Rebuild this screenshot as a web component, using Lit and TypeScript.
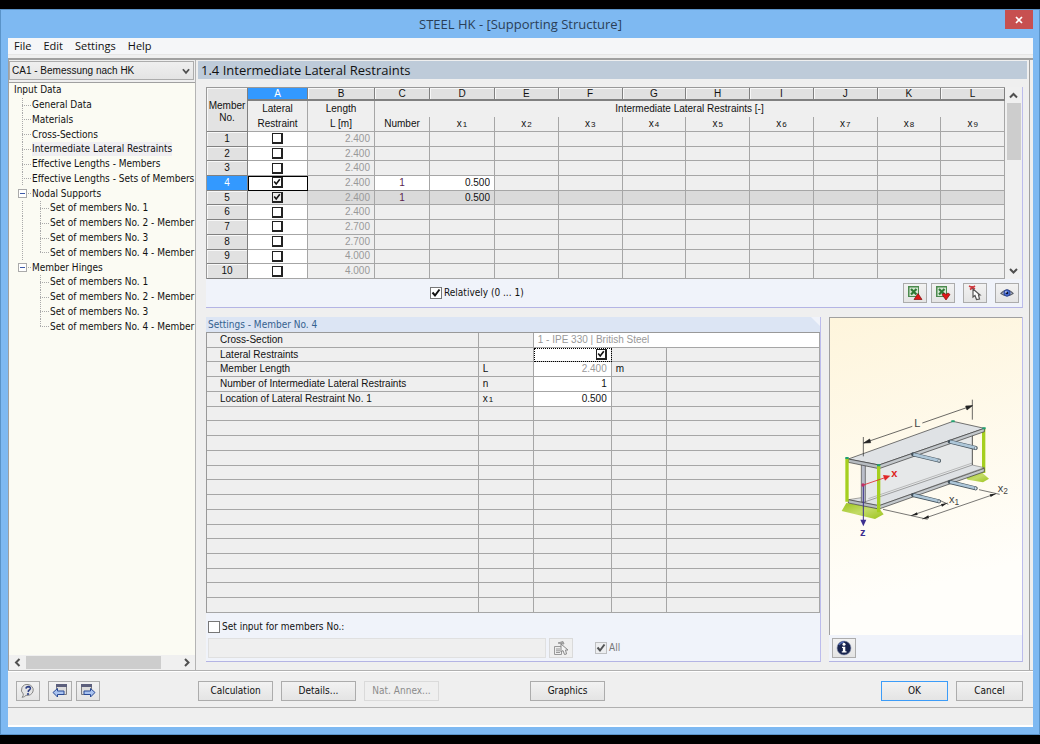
import { LitElement, html, svg, css, nothing } from "lit";
import { customElement, property, state } from "lit/decorators.js";
import { classMap } from "lit/directives/class-map.js";

interface TreeNode {
  label: string;
  children?: string[];
}

interface MemberRow {
  no: number;
  length: string;
  restrained: boolean;
  count?: string;
  x1?: string;
}

const TREE: TreeNode[] = [
  { label: "General Data" },
  { label: "Materials" },
  { label: "Cross-Sections" },
  { label: "Intermediate Lateral Restraints" },
  { label: "Effective Lengths - Members" },
  { label: "Effective Lengths - Sets of Members" },
  {
    label: "Nodal Supports",
    children: [
      "Set of members No. 1",
      "Set of members No. 2 - Member S",
      "Set of members No. 3",
      "Set of members No. 4 - Member S",
    ],
  },
  {
    label: "Member Hinges",
    children: [
      "Set of members No. 1",
      "Set of members No. 2 - Member S",
      "Set of members No. 3",
      "Set of members No. 4 - Member S",
    ],
  },
];

const MEMBERS: MemberRow[] = [
  { no: 1, length: "2.400", restrained: false },
  { no: 2, length: "2.400", restrained: false },
  { no: 3, length: "2.400", restrained: false },
  { no: 4, length: "2.400", restrained: true, count: "1", x1: "0.500" },
  { no: 5, length: "2.400", restrained: true, count: "1", x1: "0.500" },
  { no: 6, length: "2.400", restrained: false },
  { no: 7, length: "2.700", restrained: false },
  { no: 8, length: "2.700", restrained: false },
  { no: 9, length: "4.000", restrained: false },
  { no: 10, length: "4.000", restrained: false },
];

const chevron = (dir: "up" | "down" | "left" | "right") => {
  const paths = {
    up: "M1 6.5 4.500 3 8 6.500",
    down: "M1 3 4.500 6.500 8 3",
    left: "M6.500 1 3 4.500 6.500 8",
    right: "M3 1 6.500 4.500 3 8",
  };
  return html`<svg width="9" height="9" viewBox="0 0 9 9" aria-hidden="true">
    <path d=${paths[dir]} fill="none" stroke="#505050" stroke-width="2" />
  </svg>`;
};

const sheet = svg`
  <rect x="1" y="1" width="11" height="11" fill="#4c8a4e" />
  <rect x="2.500" y="2.500" width="8.500" height="8.500" fill="#d6e8d3" />
  <path d="M4 4 9.500 9.500M9.500 4 4 9.500" stroke="#2f7a35" stroke-width="2.200" />`;

const icons = {
  exportXls: html`<svg width="16" height="16" viewBox="0 0 16 16" aria-hidden="true">${sheet}
    <path d="M7 14.500 11 8.500 15 14.500Z" fill="#e01818" stroke="#7c0c0c" stroke-width=".7" /></svg>`,
  importXls: html`<svg width="16" height="16" viewBox="0 0 16 16" aria-hidden="true">${sheet}
    <path d="M7 9.500 11 15 15 9.500 13 8 11 9.500 9 8Z" fill="#e01818" stroke="#7c0c0c" stroke-width=".7" /></svg>`,
  pick: html`<svg width="16" height="16" viewBox="0 0 16 16" aria-hidden="true">
    <path d="M2 1 8 4M8 1 3 4.500M5 1V4" stroke="#cf3a40" stroke-width="1.600" />
    <path d="M6 4V12L8 10.500 9.500 14.500 12.500 14 11.500 10H13Z" fill="#fff" stroke="#555" stroke-width="1.200" /></svg>`,
  pickList: html`<svg width="16" height="16" viewBox="0 0 16 16" aria-hidden="true">
    <path d="M1.500 6.500H8.500V14.500H1.500ZM3 9H7M3 10.800H7M3 12.500H7" fill="#eee" stroke="#999" />
    <path d="M5 3 10 1.500 11 4Z" fill="#aaa" stroke="#999" />
    <path d="M8 4V12L10 10.500 11.500 14.500 13.500 14 12.500 10H15Z" fill="#f4f4f4" stroke="#888" /></svg>`,
  eye: html`<svg width="16" height="16" viewBox="0 0 16 16" aria-hidden="true">
    <path d="M2 8.500Q8 1.500 14 8.500Q8 13 2 8.500Z" fill="#e4e6ee" stroke="#5a606e" stroke-width="1.200" />
    <circle cx="8" cy="8" r="3.200" fill="#4a6fd8" stroke="#2a4290" />
    <circle cx="8" cy="8" r="1.300" fill="#0c1436" /><circle cx="7" cy="7" r=".8" fill="#fff" /></svg>`,
  info: html`<svg width="16" height="16" viewBox="0 0 16 16" aria-hidden="true">
    <circle cx="8" cy="8" r="7" fill="#18244e" stroke="#8a93b0" stroke-width=".6" />
    <path d="M3 5A6 6 0 0 1 8 2" stroke="#5069b0" fill="none" stroke-width="1.500" />
    <circle cx="8" cy="4.300" r="1.500" fill="#fff" />
    <path d="M6 6.800H9.300V11.300H10.500V12.600H5.800V11.300H6.900V8H6Z" fill="#fff" /></svg>`,
  help: html`<svg width="16" height="16" viewBox="0 0 16 16" aria-hidden="true">
    <path d="M8 1.500A5.800 5.500 0 1 1 6 12.300Q4.500 14.200 2 14.300Q3.500 13 3.300 11A5.800 5.500 0 0 1 8 1.500Z" fill="#e4e4e4" stroke="#888" />
    <path d="M6 5.600Q6.200 3.600 8.400 3.600Q10.800 3.800 10.300 5.800Q9.800 7 8.500 7.700L8.200 9" fill="none" stroke="#2c3f86" stroke-width="1.600" />
    <circle cx="8" cy="11" r="1.100" fill="#2c3f86" /></svg>`,
  prev: html`<svg width="16" height="16" viewBox="0 0 16 16" aria-hidden="true">
    <path d="M4.500 1.500H14.500V11.500H4.500Z" fill="#dcdcdc" stroke="#7c7c80" /><path d="M4 1H15V4H4Z" fill="#5c5f7c" />
    <path d="M1 9.500 5.500 5.500V8H12V11.500H5.500V14Z" fill="#a9c3f0" stroke="#294a96" /></svg>`,
  next: html`<svg width="16" height="16" viewBox="0 0 16 16" aria-hidden="true">
    <path d="M1.500 1.500H11.500V11.500H1.500Z" fill="#dcdcdc" stroke="#7c7c80" /><path d="M1 1H12V4H1Z" fill="#5c5f7c" />
    <path d="M15 9.500 10.500 5.500V8H4V11.500H10.500V14Z" fill="#a9c3f0" stroke="#294a96" /></svg>`,
};

const shared = css`
  * {
    box-sizing: border-box;
  }
  button,
  input,
  select {
    font: inherit;
    color: inherit;
    margin: 0;
    padding: 0;
  }
  svg {
    display: block;
    flex: none;
  }
  .check {
    appearance: none;
    flex: none;
    display: block;
    width: 12px;
    height: 12px;
    border: 1px solid #777;
    background: #fff center / 10px 10px no-repeat;
  }
  .check:checked {
    background-image: url("data:image/svg+xml,%3Csvg xmlns='http://www.w3.org/2000/svg' viewBox='0 0 10 10'%3E%3Cpath d='M1.500 4.500 4 7.500 8.500 1.500' fill='none' stroke='%23111' stroke-width='2'/%3E%3C/svg%3E");
  }
  .check:disabled {
    background-color: #ececec;
    border-color: #aaa;
    opacity: 0.7;
  }
  .check.raised {
    width: 11px;
    height: 11px;
    margin: 0 auto;
    border: 1px solid #222;
    border-right-width: 2px;
    border-bottom-width: 2px;
    background-size: 8px 8px;
  }
  .btn {
    display: inline-flex;
    align-items: center;
    justify-content: center;
    height: 20px;
    border: 1px solid #acacac;
    background: linear-gradient(#f2f2f2, #e4e4e4);
    flex: none;
  }
  .btn.icon {
    width: 24px;
  }
  .btn:disabled {
    color: #8b8b8b;
    border-color: #dadada;
    background: #efefef;
  }
  .grid {
    width: 100%;
    table-layout: fixed;
    border-collapse: separate;
    border-spacing: 0;
    border-left: 1px solid #999;
    border-top: 1px solid #999;
    font: 10px/12px "Liberation Sans", Arial, sans-serif;
  }
  .grid th,
  .grid td {
    padding: 0;
    font-weight: normal;
    border-right: 1px solid #a6a6a6;
    border-bottom: 1px solid #a6a6a6;
    background: #efefef;
    overflow: hidden;
    white-space: nowrap;
  }
  .grid .field {
    display: block;
    width: 100%;
    height: 12px;
    border: 0;
    background: transparent;
    outline: none;
  }
  .grid .right {
    text-align: right;
    padding-right: 4px;
  }
  .grid .dim {
    color: #999;
  }
  .grid .white {
    background: #fff;
  }
  .grid sub {
    font-size: 8px;
    line-height: 8px;
    vertical-align: baseline;
    padding-left: 1px;
  }
`;

@customElement("nav-tree")
class NavTree extends LitElement {
  @state() private current = "Intermediate Lateral Restraints";

  static styles = [
    shared,
    css`
      :host {
        display: block;
        overflow: hidden;
      }
      .tree {
        list-style: none;
        margin: 0;
        padding: 0 0 0 5px;
        height: 251px;
        display: grid;
        grid-auto-rows: 1fr;
      }
      .item {
        display: flex;
        align-items: center;
        white-space: nowrap;
      }
      .link {
        color: #111;
        text-decoration: none;
        line-height: 14px;
      }
      .link.current {
        background: #f0eff2;
      }
      .guide {
        align-self: stretch;
        flex: none;
        width: 10px;
        margin-left: 8px;
        background-repeat: no-repeat;
        background-image: repeating-linear-gradient(#aaa 0 1px, transparent 1px 2px),
          repeating-linear-gradient(90deg, #aaa 0 1px, transparent 1px 2px);
        background-size: 1px 100%, 9px 1px;
        background-position: 0 0, 0 50%;
      }
      .guide.last {
        background-size: 1px 50%, 9px 1px;
      }
      .guide.through {
        background-size: 1px 100%, 0 0;
      }
      .guide.blank {
        background: none;
      }
      .toggle {
        flex: none;
        width: 9px;
        height: 9px;
        margin-left: 4px;
        border: 1px solid #aaa;
        background: linear-gradient(#3d5aa8, #3d5aa8) center / 5px 1px no-repeat #fff;
      }
      .stub {
        flex: none;
        width: 5px;
        height: 1px;
        background: repeating-linear-gradient(90deg, transparent 0 1px, #aaa 1px 2px);
      }
    `,
  ];

  private link(label: string, pick = false) {
    const current = pick && label === this.current;
    return html`<a
      href="#"
      class=${classMap({ link: true, current })}
      @click=${(e: Event) => {
        e.preventDefault();
        this.current = label;
      }}
      >${label}</a
    >`;
  }

  render() {
    return html`<ul class="tree">
      <li class="item">${this.link("Input Data")}</li>
      ${TREE.map((node, i) => {
        const lastBranch = i === TREE.length - 1;
        return html`<li class="item">
            ${node.children
              ? html`<button class="toggle" aria-label="Collapse ${node.label}"></button><span class="stub"></span>`
              : html`<span class="guide"></span>`}
            ${this.link(node.label, true)}
          </li>
          ${node.children?.map(
            (child, j, all) => html`<li class="item">
              <span class=${classMap({ guide: true, through: !lastBranch, blank: lastBranch })}></span>
              <span class=${classMap({ guide: true, last: j === all.length - 1 })}></span>
              ${this.link(child)}
            </li>`
          )}`;
      })}
    </ul>`;
  }
}

@customElement("member-grid")
class MemberGrid extends LitElement {
  @property({ type: Number }) selected = 4;

  static styles = [
    shared,
    css`
      :host {
        display: flex;
      }
      .grid {
        flex: 1;
        width: 0;
        height: 191px;
        text-align: center;
      }
      .c-no {
        width: 41px;
      }
      .c-a {
        width: 60px;
      }
      .c-b {
        width: 67px;
      }
      .c-c {
        width: 55px;
      }
      .c-d {
        width: 65px;
      }
      .letters th {
        height: 13px;
        line-height: 10px;
        background: #e1e1e1;
        border-color: #808080;
        border-bottom-width: 2px;
        box-shadow: inset 1px 1px #f8f8f8;
      }
      .letters .active {
        background: #3399ff;
        color: #fff;
        box-shadow: none;
      }
      .letters .corner {
        line-height: 12px;
        background: #e3e3e3;
        border-bottom-width: 1px;
        padding-top: 4px;
      }
      .titles th {
        height: 15px;
      }
      .titles .two {
        line-height: 15px;
      }
      .titles .group {
        border-bottom: 0;
      }
      .no {
        background: #e1e1e1 !important;
        border-color: #808080 !important;
        box-shadow: inset 1px 1px #f8f8f8;
      }
      .picked .no {
        background: #3399ff !important;
        color: #fff;
        box-shadow: none;
      }
      .picked .box {
        outline: 1px solid #000;
        outline-offset: -1px;
      }
      .shade td {
        background: #dadada;
      }
      .shade .box {
        background: #eaeaea;
      }
      .shade .check {
        background-color: #eaeaea;
      }
      .count {
        color: #5a1e50;
        text-align: center;
      }
      .scroll {
        width: 17px;
        display: flex;
        flex-direction: column;
        align-items: center;
        padding: 4px 0;
        background: #f0f0f0;
      }
      .thumb {
        width: 14px;
        height: 57px;
        margin: 3px 0 auto;
        background: #cdcdcd;
      }
    `,
  ];

  render() {
    const letters = "ABCDEFGHIJKL".split("");
    return html`<table class="grid">
        <colgroup>
          <col class="c-no" /><col class="c-a" /><col class="c-b" /><col class="c-c" /><col class="c-d" />
          <col span="8" />
        </colgroup>
        <thead>
          <tr class="letters">
            <th class="corner" rowspan="3">Member<br />No.</th>
            ${letters.map((l) => html`<th class=${l === "A" ? "active" : ""}>${l}</th>`)}
          </tr>
          <tr class="titles">
            <th class="two" rowspan="2">Lateral<br />Restraint</th>
            <th class="two" rowspan="2">Length<br />L [m]</th>
            <th class="group" colspan="10">Intermediate Lateral Restraints [-]</th>
          </tr>
          <tr class="titles">
            <th>Number</th>
            ${[1, 2, 3, 4, 5, 6, 7, 8, 9].map((n) => html`<th>x<sub>${n}</sub></th>`)}
          </tr>
        </thead>
        <tbody>
          ${MEMBERS.map((m) => {
            const picked = m.no === this.selected;
            const edit = picked ? "white" : "";
            return html`<tr class=${classMap({ picked, shade: m.no === 5 })}>
              <th class="no" scope="row">${m.no}</th>
              <td class="box white">
                <input type="checkbox" class="check raised" aria-label="Lateral restraint, member ${m.no}" .checked=${m.restrained} />
              </td>
              <td class="right dim">${m.length}</td>
              <td class=${edit}>
                ${m.count ? html`<input class="field count" aria-label="Number, member ${m.no}" .value=${m.count} />` : nothing}
              </td>
              <td class=${edit}>
                ${m.x1 ? html`<input class="field right" aria-label="x1, member ${m.no}" .value=${m.x1} />` : nothing}
              </td>
              ${[2, 3, 4, 5, 6, 7, 8, 9].map(() => html`<td></td>`)}
            </tr>`;
          })}
        </tbody>
      </table>
      <div class="scroll">${chevron("up")}<span class="thumb"></span>${chevron("down")}</div>`;
  }
}

@customElement("settings-grid")
class SettingsGrid extends LitElement {
  static styles = [
    shared,
    css`
      :host {
        display: block;
      }
      .grid {
        height: 281px;
      }
      .c-sym {
        width: 55px;
      }
      .c-val {
        width: 78px;
      }
      .c-unit {
        width: 55px;
      }
      .c-note {
        width: 25%;
      }
      .name {
        text-align: left;
        text-indent: 13px;
      }
      .pad {
        text-indent: 4px;
      }
      .focus {
        outline: 1px dotted #000;
        outline-offset: -1px;
      }
      .focus .check {
        margin: 0 4px 0 auto;
      }
    `,
  ];

  render() {
    return html`<table class="grid">
      <colgroup>
        <col /><col class="c-sym" /><col class="c-val" /><col class="c-unit" /><col class="c-note" />
      </colgroup>
      <tbody>
        <tr>
          <th class="name" scope="row">Cross-Section</th>
          <td></td>
          <td class="white dim pad" colspan="3">1 - IPE 330 | British Steel</td>
        </tr>
        <tr>
          <th class="name" scope="row">Lateral Restraints</th>
          <td></td>
          <td class="white focus">
            <input type="checkbox" class="check raised" aria-label="Lateral Restraints" checked />
          </td>
          <td></td>
          <td></td>
        </tr>
        <tr>
          <th class="name" scope="row">Member Length</th>
          <td class="pad">L</td>
          <td class="white right dim">2.400</td>
          <td class="pad">m</td>
          <td></td>
        </tr>
        <tr>
          <th class="name" scope="row">Number of Intermediate Lateral Restraints</th>
          <td class="pad">n</td>
          <td class="white"><input class="field right" aria-label="Number of Intermediate Lateral Restraints" value="1" /></td>
          <td></td>
          <td></td>
        </tr>
        <tr>
          <th class="name" scope="row">Location of Lateral Restraint No. 1</th>
          <td class="pad">x<sub>1</sub></td>
          <td class="white"><input class="field right" aria-label="Location of Lateral Restraint No. 1" value="0.500" /></td>
          <td></td>
          <td></td>
        </tr>
        ${Array.from({ length: 14 }, () => html`<tr><td>&nbsp;</td><td></td><td></td><td></td><td></td></tr>`)}
      </tbody>
    </table>`;
  }
}

@customElement("beam-sketch")
class BeamSketch extends LitElement {
  static styles = css`
    :host {
      display: block;
    }
    svg {
      display: block;
    }
    .label {
      font: 33px "Liberation Sans", Arial, sans-serif;
      fill: #444;
    }
    .small {
      font-size: 25px;
    }
    .red {
      fill: #d22;
      font-weight: bold;
    }
    .blue {
      fill: #3b2f8f;
      font-weight: bold;
    }
  `;

  private rod(x: number, y: number) {
    return svg`<path d="M${x} ${y} L${x + 78} ${y + 19}" stroke="#44525c" stroke-width="12" stroke-linecap="round" />
      <path d="M${x + 1} ${y} L${x + 76} ${y + 18}" stroke="#adc6d8" stroke-width="8" />
      <ellipse cx="${x + 78}" cy="${y + 19}" rx="3.500" ry="5" fill="#dce8f0" stroke="#44525c" stroke-width="1.500" />`;
  }

  render() {
    return html`<svg width="190" height="165" viewBox="0 0 570 495" role="img" aria-label="Beam with intermediate lateral restraints">
      <defs>
        <linearGradient id="foot" x1="0" y1="0" x2="1" y2="1">
          <stop offset="0" stop-color="#9cc41c" /><stop offset=".5" stop-color="#c3db68" /><stop offset="1" stop-color="#9cc41c" />
        </linearGradient>
      </defs>
      <path d="M404 276 452 262 474 281 456 292 410 284Z" fill="url(#foot)" />
      <path d="M46 354 32 378 132 402 158 388 144 370Z" fill="url(#foot)" />
      <path d="M458 130V264" stroke="#a5cf1f" stroke-width="10" />
      <path d="M103 236 424 138V248L103 352Z" fill="#e6e8e9" />
      <path d="M424 138V240" stroke="#333" stroke-width="2.500" />
      <path d="M52 344 91 338 103 350 424 240 460 248 144 362Z" fill="#dfe2e5" stroke="#555" stroke-width="1.500" />
      <path d="M112 341 424 234" stroke="#888" stroke-width="1.500" fill="none" />
      <path d="M144 362 460 250V260L144 372Z" fill="#c3c8cc" stroke="#333" stroke-width="2" />
      <path d="M52 344 144 362V372L52 354Z" fill="#b7bcc1" stroke="#333" stroke-width="2" />
      <path d="M91 234H103V352L91 350Z" fill="#b9bdc9" stroke="#444" stroke-width="2" />
      <path d="M52 222 366 109 460 130 144 240Z" fill="#dfe2e5" stroke="#333" stroke-width="2" />
      <path d="M144 240 460 130V140L144 251Z" fill="#c3c8cc" stroke="#333" stroke-width="2" />
      <path d="M52 222 144 240V251L52 232Z" fill="#b7bcc1" stroke="#333" stroke-width="2" />
      <path d="M48 220V350M143 242V382" stroke="#a5cf1f" stroke-width="10" />
      <path d="M43 219H53M138 241H148M361 109H371M454 130H464" stroke="#20a070" stroke-width="6" />
      ${this.rod(246, 208)}${this.rod(356, 170)}${this.rod(246, 330)}${this.rod(356, 291)}
      <path d="M97 156V214M424 44V104M98 174 244 124M274 114 424 62" stroke="#333" stroke-width="2.200" />
      <path d="M98 174 116 162 119 173ZM424 62 404 63 408 75Z" fill="#222" stroke="#222" stroke-width="2" />
      <path d="M156 373 290 403M240 392 350 354M274 402 495 326M444 314 506 328M328 347 352 358" stroke="#333" stroke-width="2" fill="none" />
      <path d="M240 392 258 382 260 390ZM274 402 292 391 294 400ZM348 355 330 357 333 365ZM495 326 476 328 479 336Z" fill="#222" />
      <path d="M97 302V408" stroke="#3b2f8f" stroke-width="3" />
      <path d="M88 404H106L97 424Z" fill="#3b2f8f" />
      <path d="M97 300 162 278" stroke="#e02828" stroke-width="2.500" />
      <path d="M156 270 178 272 162 287Z" fill="#e02828" />
      <circle cx="96" cy="300" r="5" fill="#c02c68" />
      <text class="label" x="250" y="126">L</text>
      <text class="label red" x="181" y="277">x</text>
      <text class="label blue" x="87" y="452">z</text>
      <text class="label" x="354" y="354">x<tspan class="small" dy="7">1</tspan></text>
      <text class="label" x="500" y="320">x<tspan class="small" dy="7">2</tspan></text>
    </svg>`;
  }
}

@customElement("app-root")
class AppRoot extends LitElement {
  static styles = [
    shared,
    css`
      :host {
        display: flex;
        flex-direction: column;
        min-height: 100vh;
        box-sizing: border-box;
        padding: 9px 0;
        background: #000;
        color: #111;
        font: 10px/14px "DejaVu Sans Condensed", "DejaVu Sans", sans-serif;
      }
      .window {
        flex: 1;
        display: flex;
        flex-direction: column;
        padding: 0 6px 7px 7px;
        border: 1px solid #5a93c8;
        background: #7eb9f2;
      }
      .titlebar {
        display: grid;
        grid-template-columns: 28px 1fr 28px;
        height: 28px;
        align-items: center;
      }
      .caption {
        grid-column: 2;
        margin: 0;
        padding-bottom: 1px;
        text-align: center;
        font: 13px/20px "Open Sans", "Noto Sans", sans-serif;
        color: #2a3f58;
      }
      .close {
        align-self: start;
        width: 28px;
        height: 19px;
        border: 0;
        display: grid;
        place-items: center;
        background: #c75050;
      }
      .client {
        flex: 1;
        display: flex;
        flex-direction: column;
        background: #efefef;
      }
      .menu {
        display: flex;
        gap: 12px;
        height: 17px;
        padding-left: 6px;
        align-items: center;
        background: #f5f6f8;
        border-bottom: 1px solid #e6e6e6;
        font: 11px/16px "Open Sans", "Noto Sans", sans-serif;
      }
      .menu button {
        border: 0;
        background: none;
      }
      .main {
        flex: 1;
        display: flex;
        gap: 2px;
        margin-top: 3px;
        border-top: 2px solid #a0a0a0;
        border-bottom: 1px solid #b0b0b0;
      }
      .side {
        width: 188px;
        flex: none;
        display: flex;
        flex-direction: column;
        border-left: 1px solid #a0a0a0;
        border-right: 1px solid #b4b4b4;
        padding-top: 1px;
      }
      .case {
        appearance: none;
        height: 19px;
        margin: 0 1px 2px 0;
        padding-left: 2px;
        border: 1px solid #acacac;
        border-radius: 0;
        font: 10px/14px "Liberation Sans", Arial, sans-serif;
        background: url("data:image/svg+xml,%3Csvg xmlns='http://www.w3.org/2000/svg' viewBox='0 0 9 9'%3E%3Cpath d='M1 2.500 4.500 6.500 8 2.500' fill='none' stroke='%23505050' stroke-width='2'/%3E%3C/svg%3E")
            right 3px center / 8px 8px no-repeat,
          linear-gradient(#efefef, #e4e4e4);
      }
      .treebox {
        flex: 1;
        border-top: 1px solid #a0a0a0;
        background: #fbfbf3;
        min-width: 0;
      }
      .hscroll {
        display: flex;
        align-items: center;
        height: 15px;
        padding: 0 4px;
        background: #f0f0f0;
      }
      .hthumb {
        width: 135px;
        height: 13px;
        margin: 0 auto 0 4px;
        background: #cdcdcd;
      }
      .work {
        flex: 1;
        min-width: 0;
        display: flex;
        flex-direction: column;
        margin-right: 3px;
        padding-top: 1px;
        border-right: 1px solid #a0a0a0;
      }
      .heading {
        margin: 0 2px 0 0;
        padding-left: 3px;
        background: #becbd9;
        font: 13px/18px "Open Sans", "Noto Sans", sans-serif;
      }
      .body {
        flex: 1;
        display: flex;
        flex-direction: column;
        gap: 9px;
        padding: 8px 6px 8px 8px;
      }
      .panel {
        background: #f0f3fa;
        border-right: 1px solid #bcbcec;
        border-bottom: 1px solid #b4b4e4;
      }
      .strip {
        display: grid;
        grid-template-columns: 1fr auto;
        align-items: center;
        height: 28px;
        padding: 0 3px 0 224px;
      }
      .opt {
        display: inline-flex;
        align-items: center;
        gap: 2px;
      }
      .tools {
        display: flex;
        gap: 8px;
      }
      .pair {
        display: flex;
        gap: 4px;
      }
      .lower {
        flex: 1;
        display: flex;
        gap: 8px;
      }
      .settings {
        flex: 1;
        min-width: 0;
      }
      .legend {
        margin: 0;
        height: 15px;
        padding-left: 2px;
        font: 10px/15px "DejaVu Sans Condensed", "DejaVu Sans", sans-serif;
        color: #34618f;
        background: #dce5f4;
        clip-path: polygon(0 0, calc(100% - 9px) 0, 100% 9px, 100% 100%, 0 100%);
      }
      .apply {
        display: flex;
        flex-direction: column;
        gap: 4px;
        padding: 7px 2px 3px;
      }
      .line {
        display: flex;
        align-items: center;
      }
      .members {
        flex: 0 1 338px;
        min-width: 0;
        height: 20px;
        margin-right: 3px;
        border: 1px solid #e0e0e0;
        background: #efefef;
      }
      .all {
        margin-left: 22px;
        color: #777;
      }
      .preview {
        width: 194px;
        flex: none;
        display: flex;
        flex-direction: column;
      }
      .picture {
        flex: 1;
        display: grid;
        place-items: center;
        padding-bottom: 18px;
        border-top: 1px solid #a0a0a0;
        border-left: 1px solid #a0a0a0;
        background: linear-gradient(165deg, #fef5dc, #fffefa 80%);
      }
      .under {
        height: 26px;
        padding: 3px;
      }
      .actions {
        display: flex;
        gap: 8px;
        padding: 9px 10px 6px 8px;
        border-top: 1px solid #fff;
        border-bottom: 1px solid #b0b0b0;
      }
      .actions .btn {
        width: 75px;
      }
      .actions .icon {
        width: 24px;
      }
      .actions .nav {
        flex: none;
        width: 174px;
        display: flex;
        gap: 8px;
      }
      .actions .center {
        margin: 0 auto 0 83px;
      }
      .actions .end {
        width: 67px;
      }
      .actions .ok {
        border-color: #3c9cf8;
      }
      .status {
        height: 19px;
        border-bottom: 2px solid #fff;
      }
    `,
  ];

  render() {
    return html`<div class="window">
      <header class="titlebar">
        <h1 class="caption">STEEL HK - [Supporting Structure]</h1>
        <button class="close" aria-label="Close">
          <svg width="8" height="8" viewBox="0 0 8 8"><path d="M1 1 7 7M7 1 1 7" stroke="#fff" stroke-width="1.700" /></svg>
        </button>
      </header>
      <div class="client">
        <nav class="menu">
          <button>File</button><button>Edit</button><button>Settings</button><button>Help</button>
        </nav>
        <div class="main">
          <aside class="side">
            <select class="case" aria-label="Design case">
              <option>CA1 - Bemessung nach HK</option>
            </select>
            <nav-tree class="treebox"></nav-tree>
            <div class="hscroll">${chevron("left")}<span class="hthumb"></span>${chevron("right")}</div>
          </aside>
          <section class="work">
            <h2 class="heading">1.4 Intermediate Lateral Restraints</h2>
            <div class="body">
              <div class="panel">
                <member-grid selected="4"></member-grid>
                <div class="strip">
                  <label class="opt"><input type="checkbox" class="check" checked />Relatively (0 ... 1)</label>
                  <div class="tools">
                    <div class="pair">
                      <button class="btn icon" aria-label="Export to Excel">${icons.exportXls}</button>
                      <button class="btn icon" aria-label="Import from Excel">${icons.importXls}</button>
                    </div>
                    <button class="btn icon" aria-label="Pick member">${icons.pick}</button>
                    <button class="btn icon" aria-label="View">${icons.eye}</button>
                  </div>
                </div>
              </div>
              <div class="lower">
                <section class="panel settings">
                  <h3 class="legend">Settings - Member No. 4</h3>
                  <settings-grid></settings-grid>
                  <div class="apply">
                    <label class="opt"><input type="checkbox" class="check" />Set input for members No.:</label>
                    <div class="line">
                      <input class="members" aria-label="Members" disabled />
                      <button class="btn icon" aria-label="Pick members" disabled>${icons.pickList}</button>
                      <label class="opt all"><input type="checkbox" class="check" checked disabled />All</label>
                    </div>
                  </div>
                </section>
                <section class="panel preview">
                  <div class="picture"><beam-sketch></beam-sketch></div>
                  <div class="under"><button class="btn icon" aria-label="Information">${icons.info}</button></div>
                </section>
              </div>
            </div>
          </section>
        </div>
        <footer class="actions">
          <div class="nav">
            <button class="btn icon" aria-label="Help">${icons.help}</button>
            <div class="pair">
              <button class="btn icon" aria-label="Previous table">${icons.prev}</button>
              <button class="btn icon" aria-label="Next table">${icons.next}</button>
            </div>
          </div>
          <button class="btn">Calculation</button>
          <button class="btn">Details...</button>
          <button class="btn" disabled>Nat. Annex...</button>
          <button class="btn center">Graphics</button>
          <button class="btn end ok">OK</button>
          <button class="btn end">Cancel</button>
        </footer>
        <div class="status"></div>
      </div>
    </div>`;
  }
}
